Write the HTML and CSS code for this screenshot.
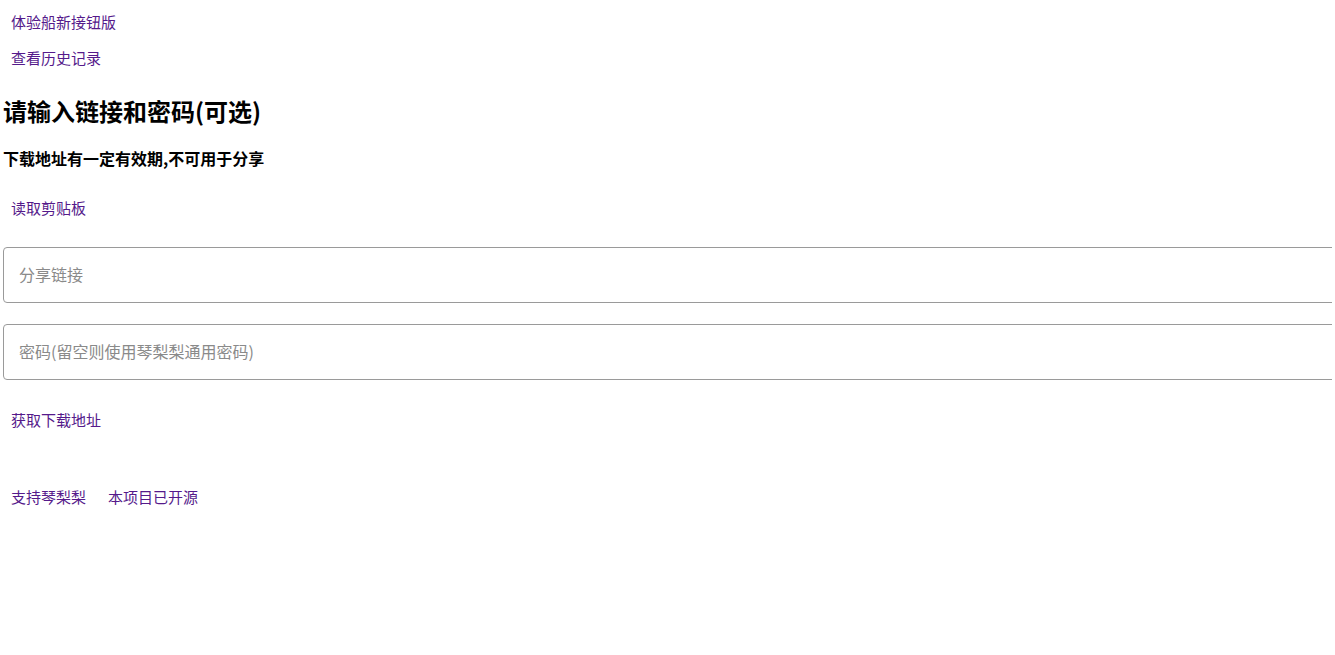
FILE: index.html
```html
<!DOCTYPE html>
<html lang="zh-CN">
<head>
<meta charset="utf-8">
<title>琴梨梨</title>
<link rel="stylesheet" href="styles.css">
</head>
<body>
<main class="page">
  <button class="text-btn">体验船新接钮版</button>
  <button class="text-btn">查看历史记录</button>
  <h2 class="title">请输入链接和密码(可选)</h2>
  <h4 class="subtitle">下载地址有一定有效期,不可用于分享</h4>
  <button class="text-btn btn-clip">读取剪贴板</button>
  <input class="field field-link" type="text" placeholder="分享链接">
  <input class="field field-pwd" type="text" placeholder="密码(留空则使用琴梨梨通用密码)">
  <button class="text-btn btn-get">获取下载地址</button>
  <div class="footer">
    <button class="text-btn">支持琴梨梨</button>
    <button class="text-btn">本项目已开源</button>
  </div>
</main>
</body>
</html>
```
FILE: styles.css
```css
html {
  overflow-x: hidden;
}
body {
  margin: 3px;
  background: #fff;
  font-family: "Noto Sans CJK SC", "Noto Sans", sans-serif;
  color: #000;
}
.page {
  display: flex;
  flex-direction: column;
  align-items: flex-start;
}
.text-btn {
  background: none;
  border: 0;
  padding: 8px;
  margin: 0;
  font-family: "Noto Sans CJK SC", "Noto Sans", sans-serif;
  font-size: 15px;
  line-height: 20px;
  color: #551a8b;
  cursor: pointer;
}
.page > .text-btn:first-child {
  margin-top: 1px;
}
.title {
  margin: 17px 0 0;
  font-size: 24px;
  line-height: 36px;
  font-weight: 700;
}
.subtitle {
  margin: 17px 0 0;
  font-size: 16px;
  line-height: 24px;
  font-weight: 700;
}
.btn-clip {
  margin-top: 20px;
}
.field {
  box-sizing: border-box;
  width: calc(100% + 40px);
  height: 56px;
  border: 1px solid #9a9a9a;
  border-radius: 4px;
  padding: 0 15px 3px;
  font-family: "Noto Sans CJK SC", "Noto Sans", sans-serif;
  font-size: 16px;
  color: #222;
  background: #fff;
  outline: none;
}
.field::placeholder {
  color: #8a8a8a;
}
.field-link {
  margin-top: 21px;
}
.field-pwd {
  margin-top: 21px;
}
.btn-get {
  margin-top: 22px;
}
.footer {
  display: flex;
  gap: 6px;
  margin-top: 41px;
}
```
